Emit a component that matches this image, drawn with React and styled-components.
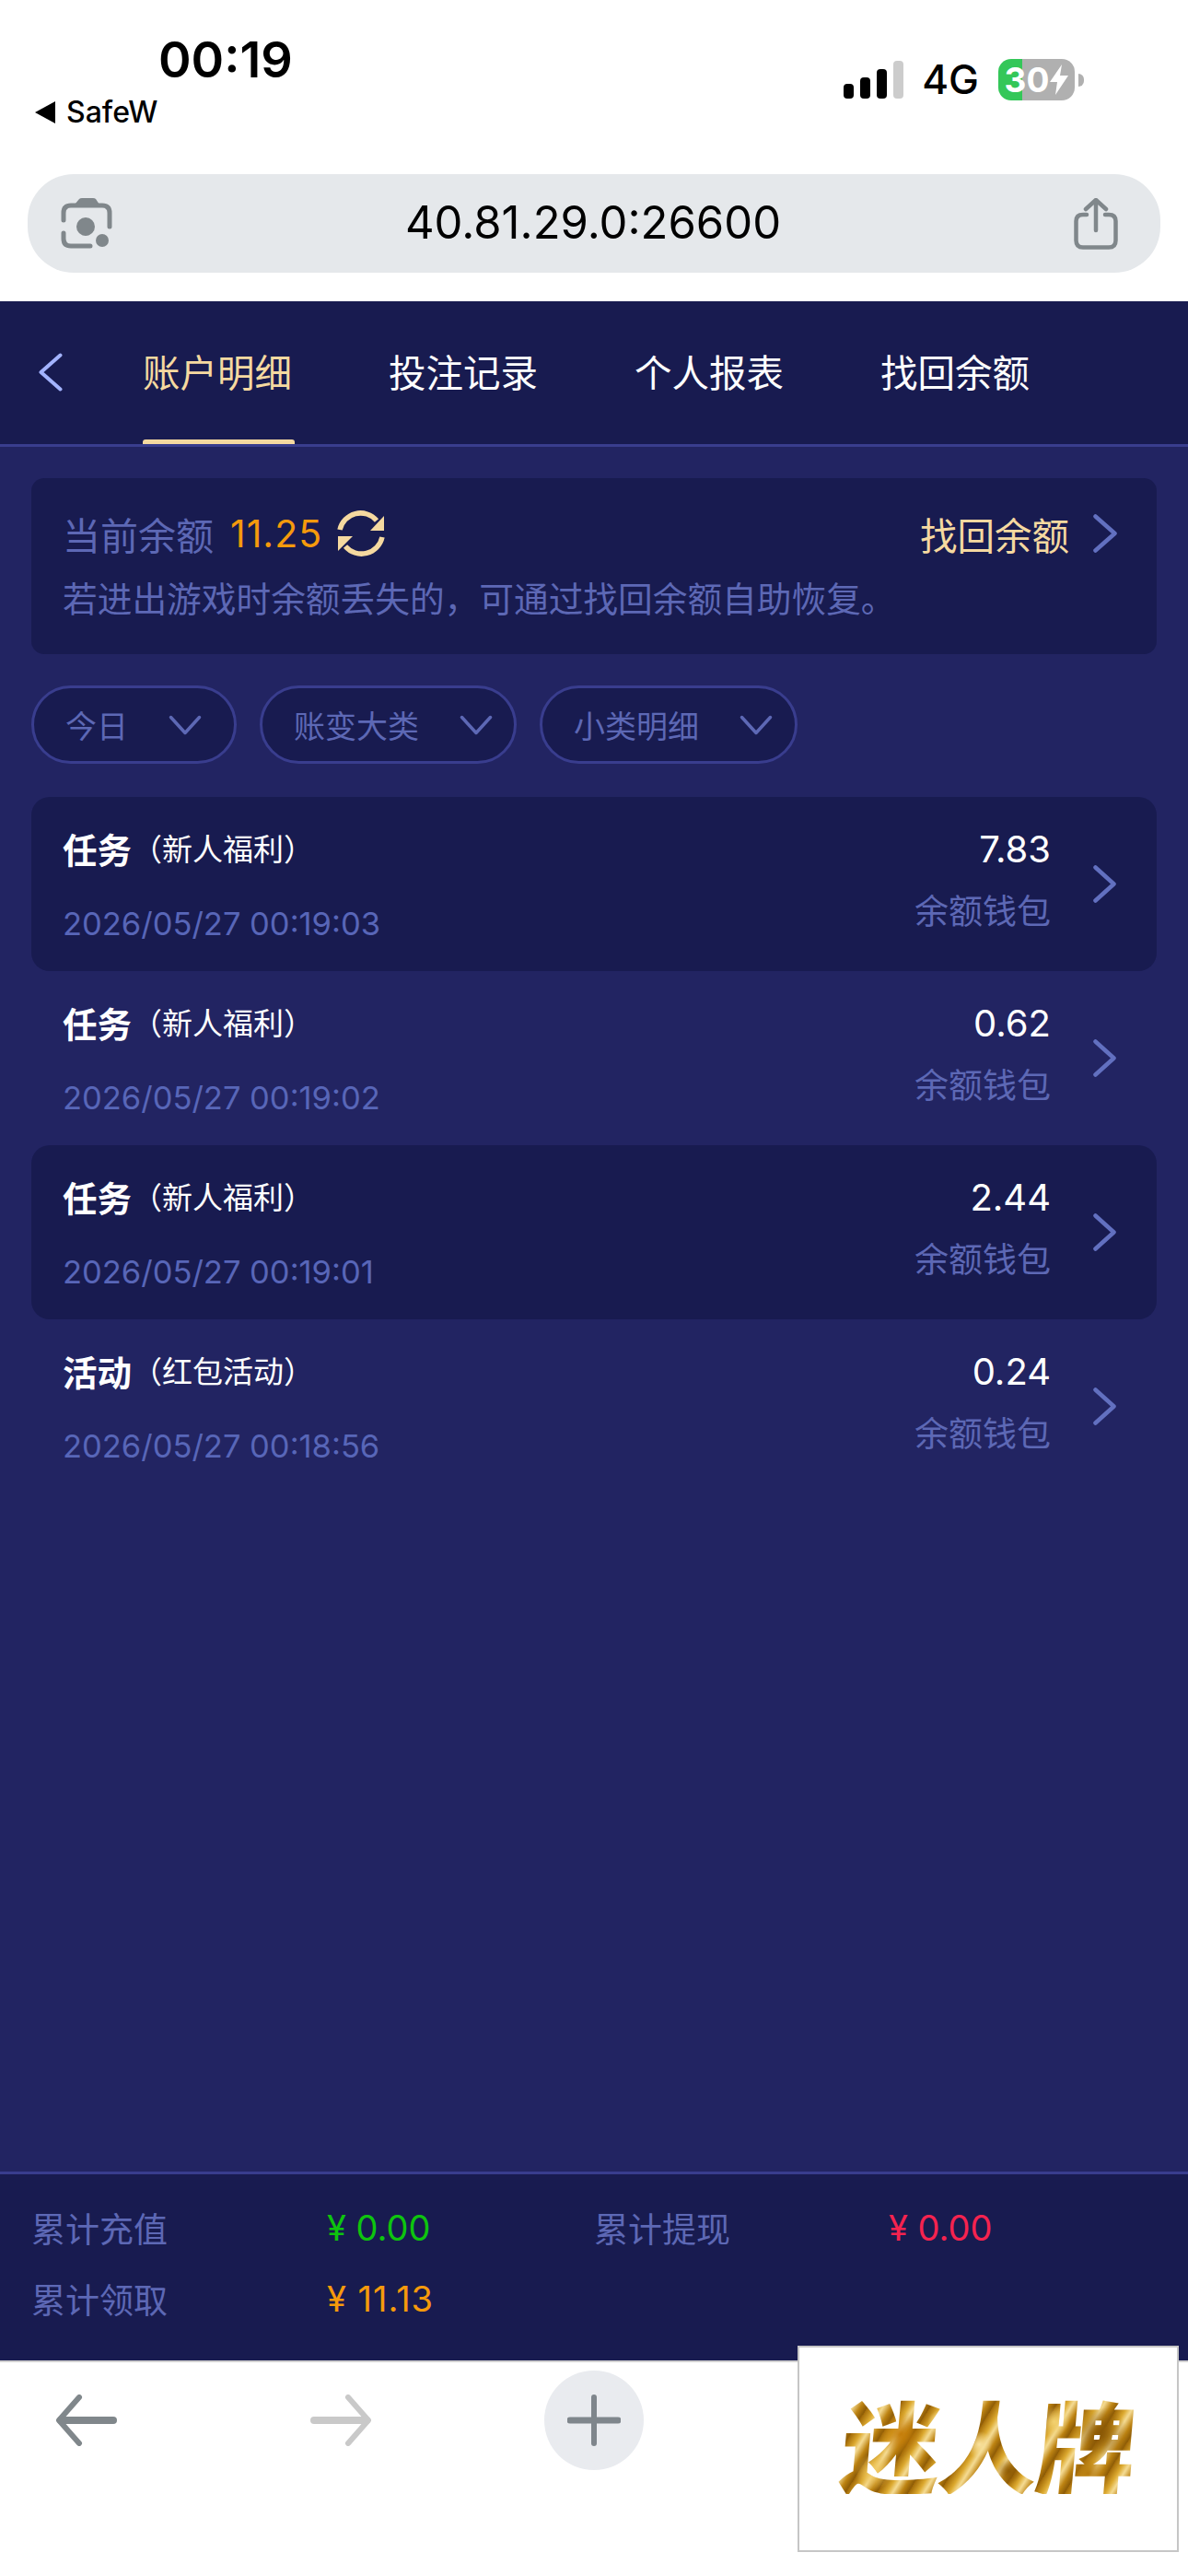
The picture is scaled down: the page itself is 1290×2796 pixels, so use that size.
import React from "react";
import styled, { createGlobalStyle } from "styled-components";

const Global = createGlobalStyle`
  html, body { margin: 0; padding: 0; background: #fff; }
  body { font-family: Inter, "Noto Sans CJK SC", sans-serif; }
  * { box-sizing: border-box; }
`;

const Page = styled.div`
  position: relative;
  width: 1290px;
  height: 2796px;
  display: flex;
  flex-direction: column;
  overflow: hidden;
  background: #fff;
`;

const StatusBar = styled.header`
  height: 189px;
  display: flex;
  justify-content: space-between;
  padding: 34px 113px 0 38px;
  flex: none;
`;
const StatusLeft = styled.div`
  display: flex;
  flex-direction: column;
`;
const Clock = styled.div`
  margin-left: 134px;
  font-size: 54px;
  line-height: 62px;
  font-weight: 600;
  color: #000;
`;
const BackApp = styled.div`
  display: flex;
  align-items: center;
  gap: 12px;
  margin-top: 8px;
  font-size: 32px;
  line-height: 36px;
  font-weight: 500;
  color: #000;
`;
const StatusRight = styled.div`
  display: flex;
  align-items: center;
  height: 45px;
  margin-top: 30px;
`;
const FourG = styled.span`
  margin: 0 21px 0 20px;
  font-size: 44px;
  font-weight: 500;
  line-height: 45px;
  color: #000;
`;
const Battery = styled.div`
  width: 83px;
  height: 45px;
  border-radius: 14px;
  background: linear-gradient(90deg, #34c759 0 26px, #b0b0b0 26px);
  display: flex;
  align-items: center;
  justify-content: center;
  gap: 1px;
  color: #fff;
  font-size: 37px;
  font-weight: 700;
  line-height: 45px;
`;
const BatteryNub = styled.div`
  width: 6px;
  height: 14px;
  margin-left: 4px;
  border-radius: 0 7px 7px 0;
  background: #b0b0b0;
`;

const UrlWrap = styled.div`
  height: 138px;
  padding: 0 30px 31px;
  flex: none;
`;
const UrlPill = styled.div`
  height: 107px;
  border-radius: 50px;
  background: #e5e8eb;
  display: flex;
  align-items: center;
  justify-content: space-between;
  padding: 0 46px 0 36px;
`;
const UrlText = styled.span`
  margin-bottom: 2px;
  font-size: 49px;
  font-weight: 400;
  color: #000;
`;

const Nav = styled.nav`
  height: 158px;
  flex: none;
  background: #181b50;
  border-bottom: 3px solid #393d8e;
  display: flex;
  align-items: stretch;
  padding-left: 42px;
`;
const BackBtn = styled.div`
  display: flex;
  align-items: center;
  width: 113px;
  padding-bottom: 2px;
`;
const Tabs = styled.div`
  display: flex;
  gap: 106px;
`;
const Tab = styled.div`
  position: relative;
  width: 161px;
  display: flex;
  align-items: center;
  padding-bottom: 5px;
  font-size: 40.5px;
  white-space: nowrap;
  color: ${(p) => (p.$active ? "#f5d9a0" : "#fff")};
  &::after {
    content: "";
    display: ${(p) => (p.$active ? "block" : "none")};
    position: absolute;
    left: 0;
    right: -4px;
    bottom: 0;
    height: 5px;
    border-radius: 3px 3px 0 0;
    background: #f5d9a0;
  }
`;

const Content = styled.main`
  flex: 1;
  background: #222462;
  padding: 34px 34px 0;
  display: flex;
  flex-direction: column;
`;
const BalanceCard = styled.section`
  height: 191px;
  border-radius: 14px;
  background: #181b50;
  padding: 34px 43px 0 34px;
`;
const BalanceTop = styled.div`
  display: flex;
  align-items: center;
  height: 52px;
`;
const BalanceLabel = styled.span`
  color: #5d68b5;
  font-size: 41px;
  white-space: nowrap;
`;
const BalanceValue = styled.span`
  margin-left: 18px;
  color: #f59a0c;
  font-size: 41px;
  letter-spacing: 1px;
`;
const RecoverLink = styled.div`
  margin-left: auto;
  display: flex;
  align-items: center;
  gap: 26px;
  color: #f5d9a0;
  font-size: 40.5px;
  white-space: nowrap;
`;
const Hint = styled.p`
  margin: 20px 0 0;
  color: #5d68b5;
  font-size: 37.7px;
  line-height: 50px;
  white-space: nowrap;
`;

const Filters = styled.div`
  display: flex;
  gap: 25px;
  margin-top: 34px;
`;
const Filter = styled.div`
  height: 85px;
  width: ${(p) => p.$w}px;
  border: 3px solid #393d8e;
  border-radius: 43px;
  background: #181b50;
  display: flex;
  align-items: center;
  justify-content: space-between;
  padding: 0 ${(p) => p.$pr}px 0 34px;
  color: #5d68b5;
  font-size: 34px;
  white-space: nowrap;
`;

const List = styled.div`
  margin-top: 36px;
  display: flex;
  flex-direction: column;
`;
const Row = styled.div`
  height: 189px;
  border-radius: 20px;
  background: ${(p) => (p.$dark ? "#181b50" : "transparent")};
  display: flex;
  align-items: center;
  padding: 0 44px 0 34px;
`;
const RowLeft = styled.div`
  flex: 1;
  align-self: flex-start;
  padding-top: 30px;
`;
const RowTitle = styled.div`
  display: flex;
  align-items: center;
  height: 50px;
  color: #fff;
  white-space: nowrap;
`;
const RowTitleMain = styled.strong`
  font-size: 37.5px;
  font-weight: 700;
`;
const RowTitleSub = styled.span`
  font-size: 33px;
`;
const RowDate = styled.div`
  margin-top: 33px;
  height: 50px;
  line-height: 50px;
  color: #5866b8;
  font-size: 34.5px;
  white-space: nowrap;
`;
const RowRight = styled.div`
  align-self: flex-start;
  padding-top: 32px;
  margin-right: 46px;
  text-align: right;
`;
const Amount = styled.div`
  height: 50px;
  line-height: 50px;
  color: #fff;
  font-size: 40px;
`;
const Wallet = styled.div`
  margin-top: 18px;
  height: 50px;
  line-height: 50px;
  color: #5d68b5;
  font-size: 37px;
  white-space: nowrap;
`;

const Footer = styled.footer`
  height: 205px;
  flex: none;
  background: #181b50;
  border-top: 3px solid #393d8e;
  padding: 19px 34px 0;
  display: grid;
  grid-template-columns: 321px 290px 320px 1fr;
  grid-auto-rows: 77px;
  align-items: center;
`;
const FooterLabel = styled.span`
  color: #5d68b5;
  font-size: 37px;
  white-space: nowrap;
`;
const FooterValue = styled.span`
  color: ${(p) => p.$color};
  font-size: 38px;
  letter-spacing: ${(p) => p.$ls || 0}px;
  white-space: nowrap;
`;

const BrowserBar = styled.div`
  height: 234px;
  flex: none;
  background: #fff;
  border-top: 2px solid #d0d0d0;
  display: flex;
  align-items: flex-start;
  padding: 9px 0 0 60px;
`;
const NavIcon = styled.div`
  display: flex;
  align-items: center;
  height: 108px;
  margin-right: ${(p) => p.$mr}px;
`;
const PlusCircle = styled.div`
  width: 108px;
  height: 108px;
  border-radius: 50%;
  background: #e9ebef;
  display: flex;
  align-items: center;
  justify-content: center;
`;

const LogoCard = styled.div`
  position: absolute;
  left: 866px;
  top: 2546px;
  width: 414px;
  height: 224px;
  background: #fff;
  border: 2px solid #c6c6c6;
  display: flex;
  align-items: center;
  justify-content: center;
  padding-bottom: 14px;
`;
const LogoText = styled.span`
  font-family: "Noto Sans CJK SC", sans-serif;
  font-weight: 900;
  font-size: 108px;
  line-height: 112px;
  letter-spacing: -2px;
  white-space: nowrap;
  transform: skewX(-5deg);
  background:
    radial-gradient(circle at 20% 42%, #c47c08 0, transparent 9%),
    radial-gradient(circle at 12% 78%, #f0c860 0, transparent 7%),
    radial-gradient(circle at 33% 30%, #fbe9ae 0, transparent 6%),
    radial-gradient(circle at 47% 52%, #f8e2a0 0, transparent 8%),
    radial-gradient(circle at 58% 78%, #8f5c06 0, transparent 7%),
    radial-gradient(circle at 72% 30%, #f3d272 0, transparent 7%),
    radial-gradient(circle at 88% 42%, #8a5806 0, transparent 10%),
    radial-gradient(circle at 85% 80%, #b57a0e 0, transparent 8%),
    repeating-linear-gradient(118deg, #a26a08 0, #dca92f 9px, #f5dc94 15px, #bd8312 23px, #8a5906 30px);
  -webkit-background-clip: text;
  background-clip: text;
  color: transparent;
`;

const Chevron = ({ dir = "right", w = 25, h = 41, color = "#6270c0", sw = 4.5 }) => {
  const d = {
    right: `M2.5 2.5 L${w - 2.5} ${h / 2} L2.5 ${h - 2.5}`,
    left: `M${w - 2.5} 2.5 L2.5 ${h / 2} L${w - 2.5} ${h - 2.5}`,
    down: `M2.5 2.5 L${w / 2} ${h - 2.5} L${w - 2.5} 2.5`,
  }[dir];
  return (
    <svg width={w} height={h} viewBox={`0 0 ${w} ${h}`} fill="none" style={{ flex: "none" }}>
      <path d={d} stroke={color} strokeWidth={sw} strokeLinecap="round" strokeLinejoin="round" />
    </svg>
  );
};

const Signal = () => (
  <svg width="65" height="41" viewBox="0 0 65 41" fill="#000">
    <rect x="0" y="25" width="11" height="16" rx="4" />
    <rect x="18" y="18" width="11" height="23" rx="4" />
    <rect x="36" y="9" width="11" height="32" rx="4" />
    <rect x="54" y="0" width="11" height="41" rx="4" fill="#cccccc" />
  </svg>
);
const Bolt = () => (
  <svg width="20" height="33" viewBox="0 0 20 33" fill="#fff">
    <path d="M13 0 L0 19 H8 L6 33 L20 12 H11 Z" />
  </svg>
);
const CameraIcon = () => (
  <svg width="56" height="56" viewBox="0 0 56 56" fill="none">
    <path d="M15 7 L20 1 Q21 0 23 0 H35 Q37 0 38 1 L42 7 Z" fill="#80878b" />
    <path d="M3 24 V16 Q3 8 11 8 H45 Q53 8 53 16 V31" stroke="#80878b" strokeWidth="5" strokeLinecap="round" />
    <path d="M3 38 V44 Q3 52 11 52 H32" stroke="#80878b" strokeWidth="5" strokeLinecap="round" />
    <circle cx="27" cy="31" r="10" fill="#80878b" />
    <circle cx="45" cy="46" r="7" fill="#80878b" />
  </svg>
);
const ShareIcon = () => (
  <svg width="48" height="56" viewBox="0 0 48 56" fill="none" stroke="#80878b" strokeWidth="4.5" strokeLinecap="round" strokeLinejoin="round">
    <path d="M14 18 H10 Q2.5 18 2.5 25 V46 Q2.5 53.500 10 53.500 H38 Q45.500 53.500 45.500 46 V25 Q45.500 18 38 18 H34" />
    <path d="M24 35 V3 M13 12 L24 2 L35 12" />
  </svg>
);
const RefreshIcon = () => (
  <svg width="52" height="52" viewBox="0 0 52 52" fill="none" style={{ marginLeft: 16, flex: "none" }}>
    <path d="M3 22 A23 23 0 0 1 43 12" stroke="#f5d9a0" strokeWidth="5.500" />
    <path d="M49 30 A23 23 0 0 1 9 40" stroke="#f5d9a0" strokeWidth="5.500" />
    <path d="M51 7 V23 H36 Z" fill="#f5d9a0" />
    <path d="M1 45 V29 H17 Z" fill="#f5d9a0" />
  </svg>
);
const BackArrow = ({ flip, color }) => (
  <svg width="68" height="56" viewBox="0 0 68 56" fill="none" style={flip ? { transform: "scaleX(-1)" } : undefined}>
    <path d="M26 3 L4 28 L26 53" stroke={color} strokeWidth="6" strokeLinecap="round" strokeLinejoin="round" />
    <path d="M6 28 H63" stroke={color} strokeWidth="8" strokeLinecap="round" />
  </svg>
);
const Plus = () => (
  <svg width="58" height="56" viewBox="0 0 58 56" fill="none" stroke="#7f868c" strokeLinecap="round">
    <path d="M29 3 V53" strokeWidth="6" />
    <path d="M3 28 H55" strokeWidth="7" />
  </svg>
);

const rows = [
  ["任务", "（新人福利）", "2026/05/27 00:19:03", "7.83"],
  ["任务", "（新人福利）", "2026/05/27 00:19:02", "0.62"],
  ["任务", "（新人福利）", "2026/05/27 00:19:01", "2.44"],
  ["活动", "（红包活动）", "2026/05/27 00:18:56", "0.24"],
];

const filters = [
  ["今日", 223, 35],
  ["账变大类", 279, 23],
  ["小类明细", 280, 24],
];

export default function App() {
  return (
    <Page>
      <Global />
      <StatusBar>
        <StatusLeft>
          <Clock>00:19</Clock>
          <BackApp>
            <svg width="22" height="24" viewBox="0 0 22 24" fill="#000">
              <path d="M22 0 V24 L0 12 Z" />
            </svg>
            SafeW
          </BackApp>
        </StatusLeft>
        <StatusRight>
          <Signal />
          <FourG>4G</FourG>
          <Battery>
            30
            <Bolt />
          </Battery>
          <BatteryNub />
        </StatusRight>
      </StatusBar>
      <UrlWrap>
        <UrlPill>
          <CameraIcon />
          <UrlText>40.81.29.0:26600</UrlText>
          <ShareIcon />
        </UrlPill>
      </UrlWrap>
      <Nav>
        <BackBtn>
          <Chevron dir="left" w={26} h={42} color="#a3b3ff" sw={4} />
        </BackBtn>
        <Tabs>
          <Tab $active>账户明细</Tab>
          <Tab>投注记录</Tab>
          <Tab>个人报表</Tab>
          <Tab>找回余额</Tab>
        </Tabs>
      </Nav>
      <Content>
        <BalanceCard>
          <BalanceTop>
            <BalanceLabel>当前余额</BalanceLabel>
            <BalanceValue>11.25</BalanceValue>
            <RefreshIcon />
            <RecoverLink>
              找回余额
              <Chevron w={26} h={42} />
            </RecoverLink>
          </BalanceTop>
          <Hint>若进出游戏时余额丢失的，可通过找回余额自助恢复。</Hint>
        </BalanceCard>
        <Filters>
          {filters.map(([label, w, pr]) => (
            <Filter key={label} $w={w} $pr={pr}>
              {label}
              <Chevron dir="down" w={36} h={22} color="#5d68b5" sw={3.5} />
            </Filter>
          ))}
        </Filters>
        <List>
          {rows.map(([main, sub, date, amount], i) => (
            <Row key={date} $dark={i % 2 === 0}>
              <RowLeft>
                <RowTitle>
                  <RowTitleMain>{main}</RowTitleMain>
                  <RowTitleSub>{sub}</RowTitleSub>
                </RowTitle>
                <RowDate>{date}</RowDate>
              </RowLeft>
              <RowRight>
                <Amount>{amount}</Amount>
                <Wallet>余额钱包</Wallet>
              </RowRight>
              <Chevron />
            </Row>
          ))}
        </List>
      </Content>
      <Footer>
        <FooterLabel>累计充值</FooterLabel>
        <FooterValue $color="#0ec40e">¥ 0.00</FooterValue>
        <FooterLabel>累计提现</FooterLabel>
        <FooterValue $color="#f5234f">¥ 0.00</FooterValue>
        <FooterLabel>累计领取</FooterLabel>
        <FooterValue $color="#f59a0c" $ls={1}>¥ 11.13</FooterValue>
      </Footer>
      <BrowserBar>
        <NavIcon $mr={208}>
          <BackArrow color="#80878b" />
        </NavIcon>
        <NavIcon $mr={187}>
          <BackArrow flip color="#c9c9c9" />
        </NavIcon>
        <PlusCircle>
          <Plus />
        </PlusCircle>
      </BrowserBar>
      <LogoCard>
        <LogoText>迷人牌</LogoText>
      </LogoCard>
    </Page>
  );
}
